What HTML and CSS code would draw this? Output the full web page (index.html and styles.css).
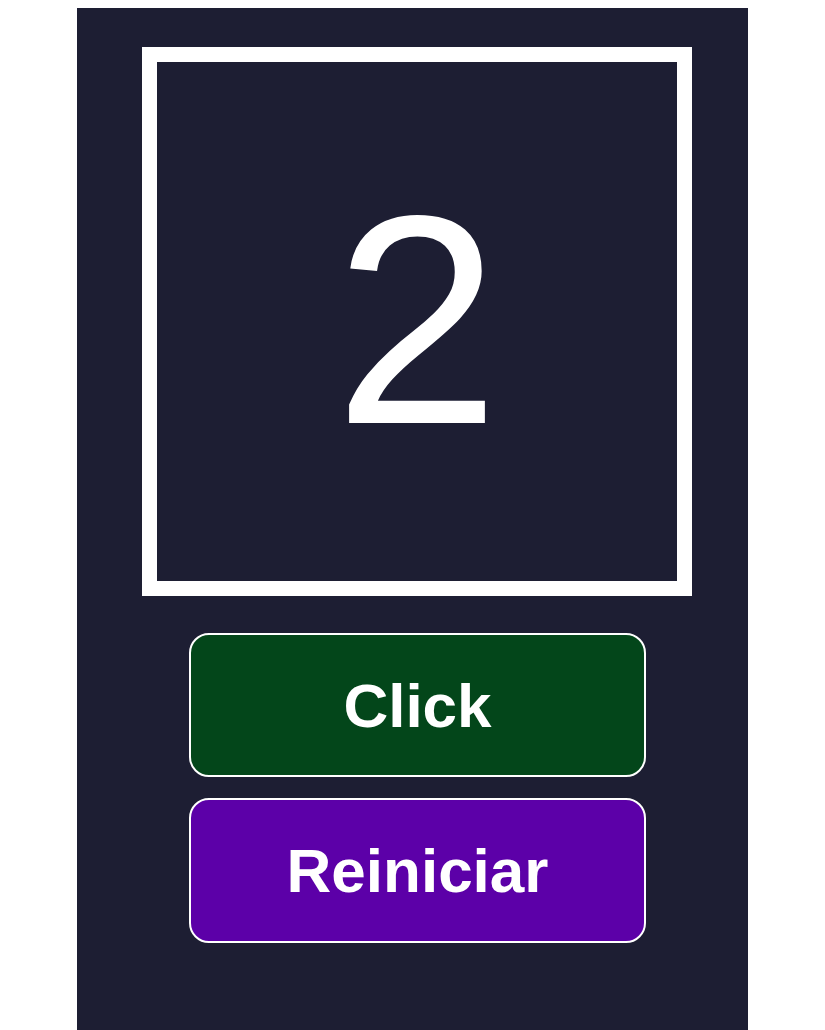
FILE: index.html
```html
<!DOCTYPE html>
<html lang="es">
<head>
<meta charset="utf-8">
<title>Contador</title>
<link rel="stylesheet" href="styles.css">
</head>
<body>
<main class="panel">
  <div class="column">
    <div class="display"><span class="count">2</span></div>
    <div class="buttons">
      <button class="btn btn-click">Click</button>
      <button class="btn btn-reset">Reiniciar</button>
    </div>
  </div>
</main>
</body>
</html>
```
FILE: styles.css
```css
html, body {
  margin: 0;
  padding: 0;
  background: #ffffff;
}
body {
  padding-top: 8px;
  font-family: "Liberation Sans", Arial, sans-serif;
}
.panel {
  width: 671px;
  margin: 0 auto;
  min-height: calc(100vh - 8px);
  background: #1d1e33;
  box-sizing: border-box;
  padding: 39px 56px 40px 65px;
}
.column {
  width: 550px;
  display: flex;
  flex-direction: column;
  align-items: center;
}
.display {
  width: 550px;
  height: 549px;
  box-sizing: border-box;
  border: 15px solid #ffffff;
  display: flex;
  justify-content: center;
  padding-top: 109px;
}
.count {
  color: #ffffff;
  font-size: 298px;
  line-height: 1;
  font-weight: 400;
}
.buttons {
  margin-top: 37px;
  display: flex;
  flex-direction: column;
  gap: 21px;
  width: 457px;
  margin-left: 1px;
}
.btn {
  height: 144px;
  border: 2px solid #ffffff;
  border-radius: 20px;
  color: #ffffff;
  font-family: "Liberation Sans", Arial, sans-serif;
  font-size: 62px;
  font-weight: 700;
  padding: 0;
}
.btn-click {
  background: #03461a;
}
.btn-reset {
  background: #5c00a8;
  height: 145px;
}
```
